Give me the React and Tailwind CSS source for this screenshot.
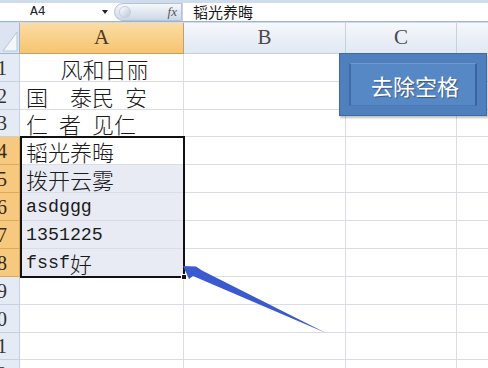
import React from "react"

const cjk = { fontFamily: '"Noto Sans CJK SC", sans-serif' }
const mono = { fontFamily: '"Liberation Mono", "Noto Sans CJK SC", monospace' }
const serif = { fontFamily: '"Liberation Serif", serif' }

const rows = [
    { n: "1", h: 28 },
    { n: "2", h: 28 },
    { n: "3", h: 27 },
    { n: "4", h: 28, sel: true },
    { n: "5", h: 28, sel: true },
    { n: "6", h: 28, sel: true },
    { n: "7", h: 28, sel: true },
    { n: "8", h: 28, sel: true },
    { n: "9", h: 28 },
    { n: "10", h: 28 },
    { n: "11", h: 27 },
    { n: "12", h: 28 },
]

function Gap({ w }) {
    return <span className="inline-block" style={{ width: w }} />
}

function CellA({ n }) {
    const cn = "text-[22px] leading-[24px] text-[#1a1a1a] font-light"
    if (n === "1") return <div className={cn + " w-full text-center"} style={cjk}>风和日丽</div>
    if (n === "2") return <div className={cn} style={cjk}>国<Gap w={22} />泰民<Gap w={11} />安</div>
    if (n === "3") return <div className={cn} style={cjk}>仁<Gap w={11} />者<Gap w={11} />见仁</div>
    if (n === "4") return <div className={cn} style={cjk}>韬光养晦</div>
    if (n === "5") return <div className={cn} style={cjk}>拨开云雾</div>
    if (n === "6") return <div className="text-[18.3px] leading-[24px] text-[#1a1a1a]" style={mono}>asdggg</div>
    if (n === "7") return <div className="text-[18.3px] leading-[24px] text-[#1a1a1a]" style={mono}>1351225</div>
    if (n === "8") return (
        <div className="flex items-end leading-[24px] text-[#1a1a1a]">
            <span className="text-[18.3px]" style={mono}>fssf</span>
            <span className="text-[22px] font-light" style={cjk}>好</span>
        </div>
    )
    return null
}

function FormulaBar() {
    return (
        <div className="h-[23px] bg-[#cfdcec] pt-[3px]">
            <div className="flex h-[19px] bg-white border-b border-[#9fb3cc]">
                <div className="w-[114px] flex items-center pl-[30px] pr-[6px]">
                    <span className="text-[13px] text-[#222]" style={mono}>A4</span>
                    <div className="flex-1" />
                    <div className="w-0 h-0 border-l-[3px] border-r-[3px] border-t-[4px] border-l-transparent border-r-transparent border-t-[#222]" />
                </div>
                <div className="w-[68px] h-[18px] rounded-l-full bg-gradient-to-b from-[#f6f8fb] to-[#cdd8e6] border border-[#b4c3d6] flex items-center justify-between pl-[4px] pr-[4px]">
                    <div className="w-[12px] h-[12px] rounded-full bg-gradient-to-br from-[#ffffff] to-[#b9c7d8] border border-[#c3cfdd]" />
                    <span className="text-[13px] italic text-[#555]" style={serif}>fx</span>
                </div>
                <div className="w-px bg-[#c5d1e0]" />
                <div className="pl-[10px] flex items-center text-[15px] text-[#1a1a1a]" style={cjk}>韬光养晦</div>
            </div>
        </div>
    )
}

function Header() {
    return (
        <div className="flex h-[31px]">
            <div className="w-[20px] shrink-0 bg-[#dbe4f0] border-r border-b border-[#9eb6ce] relative">
                <svg width="19" height="30" className="absolute left-0 top-0">
                    <polygon points="17,9 17,28 3,28" fill="#f3f6fa" stroke="#b8c6d8" />
                </svg>
            </div>
            <div className="w-[164px] shrink-0 bg-gradient-to-b from-[#fbdca4] to-[#f7c470] border-r border-b border-[#c6a060] flex items-center justify-center text-[21px] text-[#4a3a20]" style={serif}>A</div>
            <div className="w-[162px] shrink-0 bg-gradient-to-b from-[#f5f8fc] to-[#e1e8f2] border-r border-b border-[#c5d1e0] flex items-center justify-center text-[21px] text-[#4a4a4a]" style={serif}>B</div>
            <div className="w-[111px] shrink-0 bg-gradient-to-b from-[#f5f8fc] to-[#e1e8f2] border-r border-b border-[#c5d1e0] flex items-center justify-center text-[21px] text-[#4a4a4a]" style={serif}>C</div>
            <div className="flex-1 bg-gradient-to-b from-[#f5f8fc] to-[#e1e8f2] border-b border-[#c5d1e0]" />
        </div>
    )
}

function Row({ n, h, sel }) {
    const tint = sel && n !== "4"
    return (
        <div className="flex" style={{ height: h }}>
            <div className={"w-[20px] shrink-0 overflow-hidden flex items-center justify-end pr-[12px] border-r border-b text-[20px] leading-none " + (sel ? "bg-[#f7c97f] border-[#d9a95c] text-[#3a2a10]" : "bg-[#e4ebf5] border-[#c5d1e0] text-[#333]")} style={serif}>
                {n}
            </div>
            <div className={"w-[164px] shrink-0 flex items-center pl-[6px] border-r border-b border-[#dadde3] " + (tint ? "bg-[#e8ebf3]" : "bg-white")}>
                <CellA n={n} />
            </div>
            <div className="w-[162px] shrink-0 border-r border-b border-[#dadde3] bg-white" />
            <div className="w-[111px] shrink-0 border-r border-b border-[#dadde3] bg-white" />
            <div className="flex-1 border-b border-[#dadde3] bg-white" />
        </div>
    )
}

export default function App() {
    return (
        <div className="relative w-[488px] h-[368px] overflow-hidden bg-white">
            <FormulaBar />
            <Header />
            {rows.map((r) => <Row key={r.n} {...r} />)}

            {/* selection A4:A8 */}
            <div className="absolute left-[20px] top-[136px] w-[165px] h-[142px] border-2 border-[#111] pointer-events-none" />
            <div className="absolute left-[181px] top-[274px] w-[6px] h-[6px] bg-[#111] border border-white" />

            {/* 去除空格 button */}
            <div className="absolute left-[339px] top-[53px] w-[148px] h-[63px] bg-[#4f7fbd] border border-[#3e6aa3] p-[9px] shadow-[1px_2px_2px_rgba(0,0,0,0.25)]">
                <div className="h-full bg-[#5788c6] border-l-2 border-r-2 border-l-[#3f6ba6] border-r-[#3a64a0] border-t border-b border-t-[#6d9ad3] border-b-[#4a78b5] flex items-center justify-center">
                    <span className="text-[22px] text-white leading-none pl-[4px] [text-shadow:1px_1px_1px_rgba(0,0,0,0.35)]" style={cjk}>去除空格</span>
                </div>
            </div>

            {/* arrow */}
            <svg className="absolute left-0 top-0 pointer-events-none" width="488" height="368">
                <polygon points="183,266 196,266.5 202,270.5 326,333 193,276 189,279" fill="#3b5ad0" />
            </svg>
        </div>
    )
}
